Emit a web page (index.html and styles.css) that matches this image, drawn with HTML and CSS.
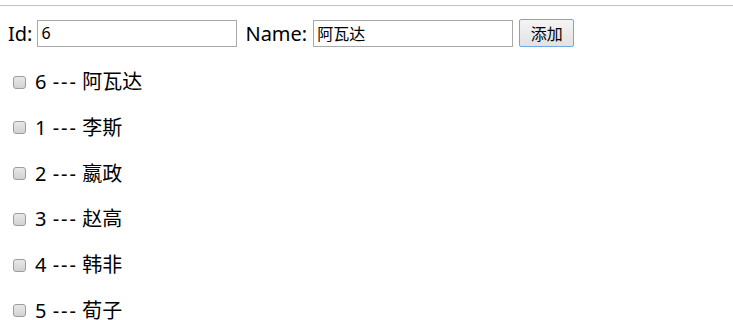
FILE: index.html
```html
<!DOCTYPE html>
<html>
<head>
<meta charset="utf-8">
<meta name="viewport" content="width=device-width, initial-scale=1">
<link rel="stylesheet" href="styles.css">
</head>
<body>
  <div class="rule"></div>

  <div class="form">
    <label class="lbl">Id:</label>
    <input type="text" class="field" id="id" value="6">
    <label class="lbl name-lbl">Name:</label>
    <input type="text" class="field" id="name" value="阿瓦达">
    <button class="add-btn" onclick="addItem()">添加</button>
  </div>

  <div id="list" class="list">
    <p class="item"><input type="checkbox" class="box"><span>6 <span class="sep">---</span> 阿瓦达</span></p>
    <p class="item"><input type="checkbox" class="box"><span>1 <span class="sep">---</span> 李斯</span></p>
    <p class="item"><input type="checkbox" class="box"><span>2 <span class="sep">---</span> 嬴政</span></p>
    <p class="item"><input type="checkbox" class="box"><span>3 <span class="sep">---</span> 赵高</span></p>
    <p class="item"><input type="checkbox" class="box"><span>4 <span class="sep">---</span> 韩非</span></p>
    <p class="item"><input type="checkbox" class="box"><span>5 <span class="sep">---</span> 荀子</span></p>
  </div>

  <script>
    function addItem() {
      var id = document.getElementById("id").value;
      var name = document.getElementById("name").value;
      if (id === "" || name === "") return;
      var p = document.createElement("p");
      p.className = "item";
      p.innerHTML = '<input type="checkbox" class="box"><span></span>';
      p.lastChild.textContent = id + " --- " + name;
      var list = document.getElementById("list");
      list.insertBefore(p, list.firstChild);
    }
  </script>
</body>
</html>
```

FILE: styles.css
```css
* {
  box-sizing: border-box;
}

body {
  margin: 0;
  font-family: "Noto Sans", "Noto Sans CJK SC", sans-serif;
  font-size: 20px;
  color: #000;
  background: #fff;
}

/* the grey line at the top */
.rule {
  margin-top: 5px;
  border-top: 1px solid #c0c0c0;
}

/* Id / Name row */
.form {
  display: flex;
  align-items: center;
  margin-top: 13px;
  padding-left: 8px;
  height: 28px;
}

.lbl {
  line-height: 27px;
  margin-right: 5px;
}

.name-lbl {
  margin-left: 8px;
  margin-right: 6px;
}

.field {
  width: 200px;
  height: 27px;
  margin: 0;
  padding: 1px 3px;
  border: 1px solid #a9a9a9;
  border-radius: 0;
  font-family: "Noto Sans", "Noto Sans CJK SC", sans-serif;
  font-size: 16px;
  color: #000;
  outline: none;
}

.add-btn {
  width: 55px;
  height: 28px;
  margin-left: 6px;
  padding: 0;
  border: 1px solid #6fa8e6;
  border-radius: 2px;
  background: linear-gradient(#f4f4f4, #e2e2e2);
  font-family: "Noto Sans CJK SC", sans-serif;
  font-size: 16px;
  color: #000;
  cursor: pointer;
}

/* the list */
.list {
  margin-top: 22px;
}

.item {
  margin: 0 0 19.8px 0;
  padding-left: 13px;
  line-height: 26px;
  display: flex;
  align-items: center;
}

.sep {
  letter-spacing: 2px;
  margin-left: 1px;
  margin-right: -1px;
}

.box {
  -webkit-appearance: none;
  appearance: none;
  width: 13px;
  height: 13px;
  margin: 0 9px 0 0;
  border: 1px solid #9c9c9c;
  border-radius: 3px;
  background: linear-gradient(#e8e8e8, #d2d2d2);
}
```
